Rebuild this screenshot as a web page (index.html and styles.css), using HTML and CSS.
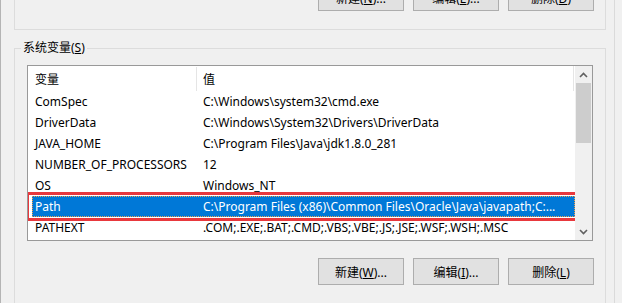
FILE: index.html
```html
<!DOCTYPE html>
<html lang="zh-CN">
<head>
    <meta charset="UTF-8">
    <title>环境变量</title>
    <link rel="stylesheet" href="styles.css">
</head>
<body>
    <div class="window">
        <div class="content">
            <div class="user-group">
                <div class="btn-row">
                    <button class="btn">新建(<u>N</u>)...</button>
                    <button class="btn">编辑(<u>E</u>)...</button>
                    <button class="btn">删除(<u>D</u>)</button>
                </div>
            </div>

            <fieldset class="sys-group">
                <legend>系统变量(<u>S</u>)</legend>
                <div class="listview">
                    <div class="list-main">
                        <div class="list-header">
                            <div class="col-name">变量</div>
                            <div class="col-value">值</div>
                        </div>
                        <div class="row"><div class="col-name">ComSpec</div><div class="col-value">C:\Windows\system32\cmd.exe</div></div>
                        <div class="row"><div class="col-name">DriverData</div><div class="col-value">C:\Windows\System32\Drivers\DriverData</div></div>
                        <div class="row"><div class="col-name">JAVA_HOME</div><div class="col-value">C:\Program Files\Java\jdk1.8.0_281</div></div>
                        <div class="row"><div class="col-name">NUMBER_OF_PROCESSORS</div><div class="col-value">12</div></div>
                        <div class="row"><div class="col-name">OS</div><div class="col-value">Windows_NT</div></div>
                        <div class="row selected"><div class="col-name">Path</div><div class="col-value">C:\Program Files (x86)\Common Files\Oracle\Java\javapath;C:...</div></div>
                        <div class="row"><div class="col-name">PATHEXT</div><div class="col-value">.COM;.EXE;.BAT;.CMD;.VBS;.VBE;.JS;.JSE;.WSF;.WSH;.MSC</div></div>
                    </div>
                    <div class="scrollbar">
                        <div class="arrow">
                            <svg width="9" height="6" viewBox="0 0 9 6"><path d="M1 5 L4.5 1.5 L8 5" fill="none" stroke="#606060" stroke-width="1.6"/></svg>
                        </div>
                        <div class="thumb"></div>
                        <div class="track"></div>
                        <div class="arrow">
                            <svg width="9" height="6" viewBox="0 0 9 6"><path d="M1 1 L4.5 4.5 L8 1" fill="none" stroke="#606060" stroke-width="1.6"/></svg>
                        </div>
                    </div>
                </div>
                <div class="btn-row">
                    <button class="btn">新建(<u>W</u>)...</button>
                    <button class="btn">编辑(<u>I</u>)...</button>
                    <button class="btn">删除(<u>L</u>)</button>
                </div>
            </fieldset>
        </div>
    </div>
</body>
</html>
```

FILE: styles.css
```css
* {
    margin: 0;
    padding: 0;
    box-sizing: border-box;
}

body {
    background: #f0f0f0;
    font-family: "Noto Sans", "Noto Sans CJK SC", sans-serif;
    font-size: 12px;
    color: #000;
    overflow: hidden;
    height: 303px;
}

.window {
    width: 615px;
    height: 303px;
    overflow: hidden;
    border-left: 1px solid #b4b4b4;
    border-right: 1px solid #dadada;
}

.content {
    margin-left: 13px;
    width: 592px;
}

/* top group, mostly scrolled out of view */
.user-group {
    margin-top: -40px;
    height: 70px;
    border: 1px solid #dcdcdc;
    padding: 23px 11px 0 0;
}

.btn-row {
    display: flex;
    justify-content: flex-end;
    gap: 9px;
}

.btn {
    width: 86px;
    height: 27px;
    background: #e1e1e1;
    border: 1px solid #adadad;
    font-family: inherit;
    font-size: 12px;
    color: #000;
}

.btn u {
    text-underline-offset: 1px;
}

/* system variables group */
.sys-group {
    margin-top: 10px;
    border: 1px solid #dcdcdc;
    padding: 9px 11px 0 12px;
    height: 270px;
}

.sys-group legend {
    margin-left: -6px;
    padding: 0 2px;
    line-height: 16px;
}

.listview {
    display: flex;
    width: 566px;
    height: 176px;
    background: #fff;
    border: 1px solid #999;
}

.list-main {
    flex: 1;
    overflow: hidden;
}

.list-header {
    display: flex;
    height: 25px;
    align-items: center;
    border-right: 1px solid #e5e5e5;
    margin-right: 1px;
}

.list-header .col-name {
    border-right: 1px solid #e5e5e5;
    height: 24px;
    margin-top: 1px;
    display: flex;
    align-items: center;
}

.col-name {
    width: 169px;
    padding-left: 7px;
    flex-shrink: 0;
    white-space: nowrap;
}

.col-value {
    padding-left: 6px;
    white-space: nowrap;
}

.row {
    display: flex;
    align-items: center;
    height: 21px;
    position: relative;
}

.row.selected {
    background: #0078d7;
    color: #fff;
    margin-left: 4px;
    outline: 1px dotted #f0a050;
    outline-offset: -1px;
}

.row.selected .col-name {
    width: 165px;
    padding-left: 3px;
}

/* red annotation box over the selected row */
.row.selected::after {
    content: '';
    position: absolute;
    left: -6px;
    right: -3px;
    top: -4px;
    bottom: -4px;
    border: 3px solid #e8383d;
}

.scrollbar {
    width: 17px;
    display: flex;
    flex-direction: column;
    background: #f0f0f0;
}

.arrow {
    height: 17px;
    display: flex;
    align-items: center;
    justify-content: center;
}

.thumb {
    height: 60px;
    margin: 0 1px;
    background: #cdcdcd;
}

.track {
    flex: 1;
}

.sys-group .btn-row {
    margin-top: 17px;
}
```
